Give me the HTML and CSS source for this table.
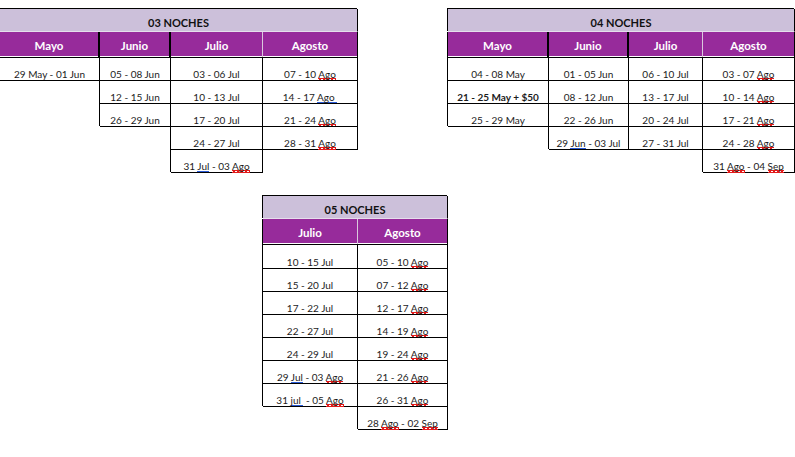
FILE: index.html
```html
<!DOCTYPE html>
<html lang="es">
<head>
<meta charset="utf-8">
<title>Noches</title>
<link rel="stylesheet" href="styles.css">
</head>
<body>
<div class="sheet">

  <div class="tbl t1">
    <div class="title">03 NOCHES</div>
    <div class="cols">
      <div class="col">
        <div class="hd dark">Mayo</div>
        <div class="c">29 May - 01 Jun</div>
      </div>
      <div class="col">
        <div class="hd dark">Junio</div>
        <div class="c">05 - 08 Jun</div>
        <div class="c">12 - 15 Jun</div>
        <div class="c">26 - 29 Jun</div>
      </div>
      <div class="col">
        <div class="hd light">Julio</div>
        <div class="c">03 - 06 Jul</div>
        <div class="c">10 - 13 Jul</div>
        <div class="c">17 - 20 Jul</div>
        <div class="c">24 - 27 Jul</div>
        <div class="c">31 <span class="gr">Jul</span> - 03 <span class="sp">Ago</span></div>
      </div>
      <div class="col">
        <div class="hd">Agosto</div>
        <div class="c">07 - 10 <span class="sp">Ago</span></div>
        <div class="c">14 - 17 <span class="gr">Ago&nbsp;</span></div>
        <div class="c">21 - 24 <span class="sp">Ago</span></div>
        <div class="c">28 - 31 <span class="sp">Ago</span></div>
      </div>
    </div>
  </div>

  <div class="tbl t2">
    <div class="title">04 NOCHES</div>
    <div class="cols">
      <div class="col">
        <div class="hd dark">Mayo</div>
        <div class="c">04 - 08 May</div>
        <div class="c bold">21 - 25 May + $50</div>
        <div class="c">25 - 29 May</div>
      </div>
      <div class="col">
        <div class="hd dark">Junio</div>
        <div class="c">01 - 05 Jun</div>
        <div class="c">08 - 12 Jun</div>
        <div class="c">22 - 26 Jun</div>
        <div class="c">29 <span class="gr">Jun</span> - 03 Jul</div>
      </div>
      <div class="col">
        <div class="hd light">Julio</div>
        <div class="c">06 - 10 Jul</div>
        <div class="c">13 - 17 Jul</div>
        <div class="c">20 - 24 Jul</div>
        <div class="c">27 - 31 Jul</div>
      </div>
      <div class="col">
        <div class="hd">Agosto</div>
        <div class="c">03 - 07 <span class="sp">Ago</span></div>
        <div class="c">10 - 14 <span class="sp">Ago</span></div>
        <div class="c">17 - 21 <span class="sp">Ago</span></div>
        <div class="c">24 - 28 <span class="sp">Ago</span></div>
        <div class="c">31 <span class="sp">Ago</span> - 04 <span class="sp">Sep</span></div>
      </div>
    </div>
  </div>

  <div class="tbl t3">
    <div class="title">05 NOCHES</div>
    <div class="cols">
      <div class="col">
        <div class="hd light">Julio</div>
        <div class="c first">10 - 15 Jul</div>
        <div class="c">15 - 20 Jul</div>
        <div class="c">17 - 22 Jul</div>
        <div class="c">22 - 27 Jul</div>
        <div class="c">24 - 29 Jul</div>
        <div class="c">29 <span class="gr">Jul</span> - 03 <span class="sp">Ago</span></div>
        <div class="c">31 <span class="gr">jul&nbsp;</span> - 05 <span class="sp">Ago</span></div>
      </div>
      <div class="col">
        <div class="hd">Agosto</div>
        <div class="c first">05 - 10 <span class="sp">Ago</span></div>
        <div class="c">07 - 12 <span class="sp">Ago</span></div>
        <div class="c">12 - 17 <span class="sp">Ago</span></div>
        <div class="c">14 - 19 <span class="sp">Ago</span></div>
        <div class="c">19 - 24 <span class="sp">Ago</span></div>
        <div class="c">21 - 26 <span class="sp">Ago</span></div>
        <div class="c">26 - 31 <span class="sp">Ago</span></div>
        <div class="c">28 <span class="sp">Ago</span> - 02 <span class="sp">Sep</span></div>
      </div>
    </div>
  </div>

</div>
</body>
</html>
```

FILE: styles.css
```css
* { box-sizing: border-box; }

html, body {
  margin: 0;
  background: #ffffff;
}

body {
  font-family: Lato, "Liberation Sans", sans-serif;
  color: #1c1c1c;
  overflow: hidden;
}

.sheet {
  display: grid;
  grid-template-columns: 263px 95px 90px 347px;
  grid-template-rows: auto auto;
  row-gap: 23px;
  padding-top: 9px;
  width: 795px;
}

.t1 { grid-column: 1 / 3; grid-row: 1; }
.t2 { grid-column: 4; grid-row: 1; }
.t3 { grid-column: 2 / 4; grid-row: 2; }

.tbl {
  display: flex;
  flex-direction: column;
  align-items: stretch;
}

.title {
  height: 23px;
  background: #ccc0da;
  border-right: 1px solid #000;
  border-bottom: 1px solid #e6dfec;
  box-shadow: -1px -1px 0 0 #000;
  text-align: center;
  padding-top: 8px;
  font-weight: 700;
  font-size: 11px;
  line-height: 12px;
  color: #111;
}

.cols {
  display: flex;
  align-items: flex-start;
}

.col {
  display: flex;
  flex-direction: column;
  flex: none;
}

.t1 .col:nth-child(1) { width: 100px; }
.t1 .col:nth-child(2) { width: 71px; }
.t1 .col:nth-child(3) { width: 92px; }
.t1 .col:nth-child(4) { width: 95px; }

.t2 .col:nth-child(1) { width: 101px; }
.t2 .col:nth-child(2) { width: 80px; }
.t2 .col:nth-child(3) { width: 74px; }
.t2 .col:nth-child(4) { width: 92px; }

.t3 .col:nth-child(1) { width: 95px; }
.t3 .col:nth-child(2) { width: 90px; }

.hd {
  height: 26px;
  background: #972b9b;
  color: #ffffff;
  font-weight: 700;
  font-size: 11.5px;
  line-height: 12px;
  text-align: center;
  padding-top: 8px;
  border-right: 1px solid #000;
  border-bottom: 1px solid #000;
  box-shadow: inset 0 -1px 0 #ffffff;
}

.hd.dark {
  border-right: 2px solid #000;
}

.hd.light {
  border-right: 1px solid #d9c8dc;
}

.col:first-child .hd {
  box-shadow: inset 0 -1px 0 #ffffff, -1px 0 0 0 #000;
}

.c {
  height: 23px;
  text-align: center;
  padding-top: 10px;
  border-right: 1px solid #000;
  border-bottom: 1px solid #000;
  box-shadow: -1px -1px 0 0 #000;
  font-size: 10px;
  line-height: 12px;
  white-space: nowrap;
}

.t3 .c.first { height: 24px; padding-top: 11px; }

.c.bold { font-weight: 700; }

.sp {
  padding-bottom: 1px;
  background:
    linear-gradient(135deg, transparent 30%, #e21a1a 30%, #e21a1a 62%, transparent 62%) 0 100% / 4px 3px repeat-x,
    linear-gradient(45deg, transparent 30%, #e21a1a 30%, #e21a1a 62%, transparent 62%) 0 100% / 4px 3px repeat-x;
}

.gr {
  background: linear-gradient(#2a5bd7, #2a5bd7) 0 100% / 100% 1px no-repeat;
}
```
